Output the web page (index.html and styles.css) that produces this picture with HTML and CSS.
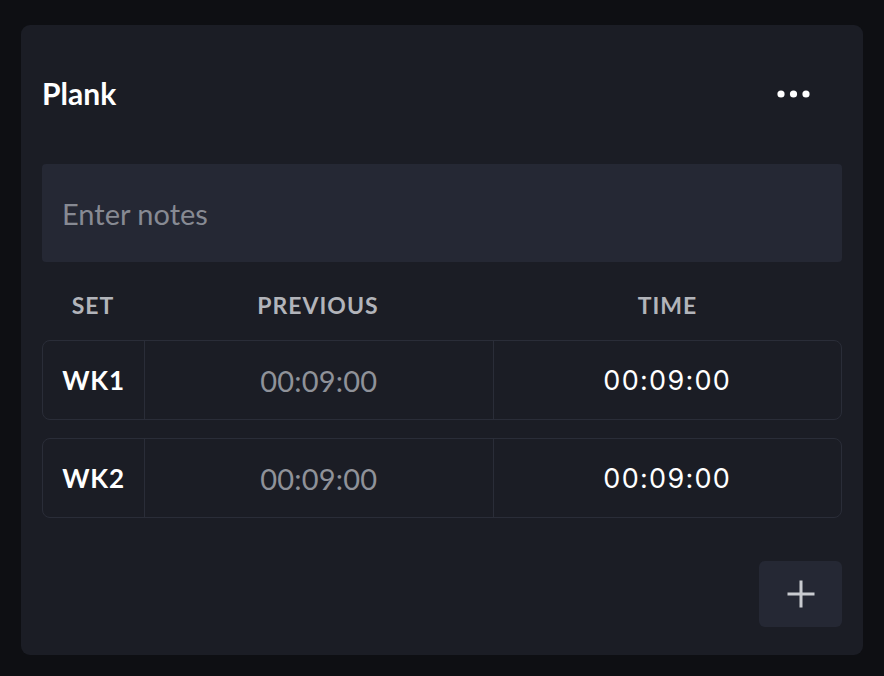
FILE: index.html
```html
<!DOCTYPE html>
<html>
<head>
<meta charset="utf-8">
<link rel="stylesheet" href="styles.css">
</head>
<body>
<div class="card">
  <div class="card-head">
    <div class="title">Plank</div>
    <button class="more" aria-label="More">
      <svg width="34" height="8" viewBox="0 0 34 8"><circle cx="4" cy="4" r="3.6" fill="#fff"/><circle cx="16.5" cy="4" r="3.6" fill="#fff"/><circle cx="29" cy="4" r="3.6" fill="#fff"/></svg>
    </button>
  </div>
  <div class="notes">Enter notes</div>
  <div class="cols">
    <div>SET</div>
    <div>PREVIOUS</div>
    <div>TIME</div>
  </div>
  <div class="rows">
    <div class="row">
      <div class="cell set">WK1</div>
      <div class="cell prev">00:09:00</div>
      <div class="cell time">00:09:00</div>
    </div>
    <div class="row">
      <div class="cell set">WK2</div>
      <div class="cell prev">00:09:00</div>
      <div class="cell time">00:09:00</div>
    </div>
  </div>
  <div class="foot">
    <button class="add" aria-label="Add set">
      <svg width="30" height="30" viewBox="0 0 30 30"><path d="M15 1.5V28.5M1.5 15H28.5" stroke="#c9cbd0" stroke-width="3"/></svg>
    </button>
  </div>
</div>
</body>
</html>
```
FILE: styles.css
```css
* { box-sizing: border-box; }
html, body { margin: 0; padding: 0; }
body {
  background: #0e0f13;
  font-family: Lato, "Open Sans", sans-serif;
  color: #fff;
  width: 884px;
  height: 676px;
  padding: 25px 21px 21px;
}
.card {
  background: #1b1d25;
  border-radius: 9px;
  height: 630px;
  padding: 0 21px;
  display: flex;
  flex-direction: column;
}
.card-head {
  height: 139px;
  display: flex;
  align-items: flex-start;
  justify-content: space-between;
  padding-top: 51px;
}
.title {
  font-size: 30px;
  font-weight: 700;
  line-height: 34px;
}
.more {
  background: none;
  border: 0;
  padding: 14px 31px 12px 0;
  margin-top: 0;
  line-height: 0;
}
.notes {
  height: 98px;
  background: #252834;
  border-radius: 4px;
  padding: 0 20px;
  display: flex;
  align-items: center;
  font-size: 29px;
  color: #878a93;
}
.cols {
  display: grid;
  grid-template-columns: 102px 1fr 1fr;
  height: 78px;
  padding-top: 30px;
  font-size: 23px;
  font-weight: 700;
  letter-spacing: 1px;
  line-height: 26px;
  color: #b2b4ba;
  text-align: center;
}
.cols > div:nth-child(2) { padding-right: 1px; }
.rows {
  display: flex;
  flex-direction: column;
  gap: 18px;
}
.row {
  height: 80px;
  border: 1.5px solid #2a2d38;
  border-radius: 8px;
  display: grid;
  grid-template-columns: 101px 1fr 1fr;
}
.cell {
  display: flex;
  align-items: center;
  justify-content: center;
}
.cell + .cell { border-left: 1.5px solid #2a2d38; }
.set {
  font-size: 26px;
  font-weight: 700;
  letter-spacing: 0.8px;
}
.prev {
  font-size: 29px;
  font-weight: 400;
  letter-spacing: 0.2px;
  color: #8f9299;
}
.time {
  font-family: Inter, sans-serif;
  font-size: 27px;
  font-weight: 400;
  letter-spacing: 1.3px;
  color: #fff;
}
.foot {
  display: flex;
  justify-content: flex-end;
  padding-top: 43px;
}
.add {
  width: 83px;
  height: 66px;
  border: 0;
  border-radius: 6px;
  background: #252834;
  display: flex;
  align-items: center;
  justify-content: center;
  padding: 0;
}
```
